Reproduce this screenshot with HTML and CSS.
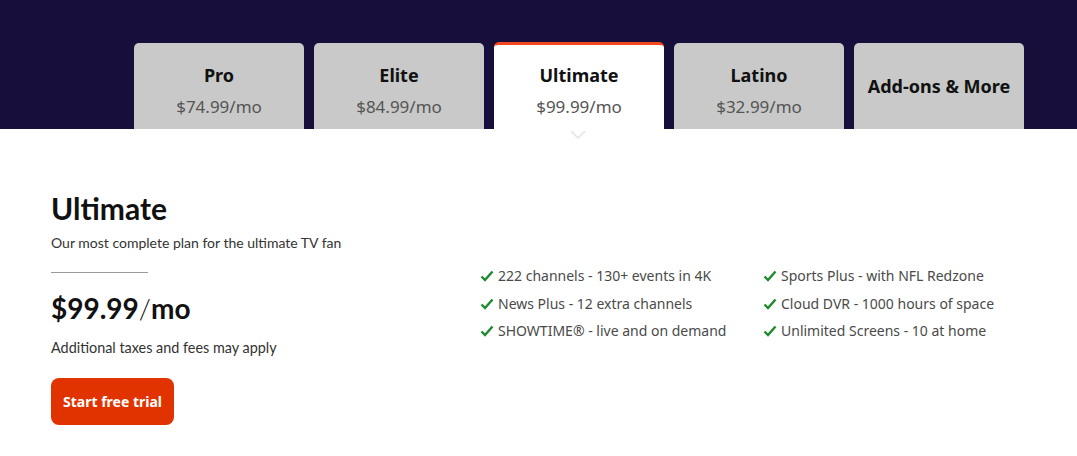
FILE: index.html
```html
<!DOCTYPE html>
<html>
<head>
<meta charset="utf-8">
<link rel="stylesheet" href="styles.css">
</head>
<body>
<header class="hero">
  <nav class="tabs">
    <div class="tab"><div class="tab-name">Pro</div><div class="tab-price">$74.99/mo</div></div>
    <div class="tab"><div class="tab-name">Elite</div><div class="tab-price">$84.99/mo</div></div>
    <div class="tab active"><div class="tab-name">Ultimate</div><div class="tab-price">$99.99/mo</div></div>
    <div class="tab"><div class="tab-name">Latino</div><div class="tab-price">$32.99/mo</div></div>
    <div class="tab single"><div class="tab-name">Add-ons &amp; More</div></div>
  </nav>
</header>
<div class="chev-row">
  <svg class="chev" width="16" height="9" viewBox="0 0 16 9"><path d="M1 1 L8 8 L15 1" fill="none" stroke="#e4e4e4" stroke-width="1.6"/></svg>
</div>
<main class="plan">
  <section class="summary">
    <h1 class="plan-title">Ultimate</h1>
    <p class="plan-sub">Our most complete plan for the ultimate TV fan</p>
    <hr class="divider">
    <div class="plan-price">$99.99<span class="slash">/</span>mo</div>
    <p class="plan-note">Additional taxes and fees may apply</p>
    <button class="cta">Start free trial</button>
  </section>
  <ul class="features">
    <li><svg class="check" viewBox="0 0 14 12"><path d="M1.5 6.5 L5 10 L12.5 1.5" fill="none" stroke="#1e8a2e" stroke-width="2.4"/></svg>222 channels - 130+ events in 4K</li>
    <li><svg class="check" viewBox="0 0 14 12"><path d="M1.5 6.5 L5 10 L12.5 1.5" fill="none" stroke="#1e8a2e" stroke-width="2.4"/></svg>Sports Plus - with NFL Redzone</li>
    <li><svg class="check" viewBox="0 0 14 12"><path d="M1.5 6.5 L5 10 L12.5 1.5" fill="none" stroke="#1e8a2e" stroke-width="2.4"/></svg>News Plus - 12 extra channels</li>
    <li><svg class="check" viewBox="0 0 14 12"><path d="M1.5 6.5 L5 10 L12.5 1.5" fill="none" stroke="#1e8a2e" stroke-width="2.4"/></svg>Cloud DVR - 1000 hours of space</li>
    <li><svg class="check" viewBox="0 0 14 12"><path d="M1.5 6.5 L5 10 L12.5 1.5" fill="none" stroke="#1e8a2e" stroke-width="2.4"/></svg>SHOWTIME® - live and on demand</li>
    <li><svg class="check" viewBox="0 0 14 12"><path d="M1.5 6.5 L5 10 L12.5 1.5" fill="none" stroke="#1e8a2e" stroke-width="2.4"/></svg>Unlimited Screens - 10 at home</li>
  </ul>
</main>
</body>
</html>
```
FILE: styles.css
```css
* { box-sizing: border-box; }
html, body { margin: 0; padding: 0; background: #fff; }
body { font-family: "Noto Sans", "Liberation Sans", sans-serif; color: #111; width: 1077px; overflow: hidden; }

.hero { background: #170e3c; height: 129px; padding-top: 43px; }
.tabs { display: flex; gap: 10px; padding-left: 134px; }
.tab {
  width: 170px; height: 86px; background: #c8c9c8; border-radius: 5px 5px 0 0;
  display: flex; flex-direction: column; align-items: center; padding-top: 20px;
}
.tab.active { background: #fff; border-top: 3px solid #f2471f; margin-top: -1px; height: 87px; padding-top: 18px; }
.tab.single { justify-content: center; padding-top: 0; }
.tab-name { font-size: 18px; font-weight: 700; color: #111; line-height: 24px; }
.tab-price { font-size: 17px; color: #555; line-height: 22px; margin-top: 9px; }

.chev-row { display: flex; padding-left: 570px; height: 10px; margin-top: 1px; }
.chev { width: 16px; height: 9px; }

.plan { display: flex; padding: 0 51px; margin-top: 50px; }
.summary { width: 430px; font-family: "Lato", "Noto Sans", sans-serif; }
.plan-title { font-size: 30px; font-weight: 700; margin: 0; line-height: 36px; }
.plan-sub { font-size: 14px; color: #333; margin: 7px 0 0; line-height: 20px; }
.divider { width: 97px; border: 0; border-top: 1px solid #9a9a9a; margin: 19px 0 0; }
.plan-price { font-size: 28px; font-weight: 700; margin-top: 18px; line-height: 34px; }
.slash { font-weight: 300; }
.plan-note { font-size: 14.4px; color: #333; margin: 13px 0 0; line-height: 20px; }
.cta {
  display: block; margin-top: 20px; width: 123px; height: 47px; border: 0; border-radius: 8px; background: #e13300;
  color: #fff; font-family: "Noto Sans", sans-serif; font-size: 14px; font-weight: 700; cursor: pointer; padding: 0;
}

.features {
  list-style: none; margin: 76px 0 0; padding: 0; display: grid; grid-template-columns: 283px 260px;
  row-gap: 7.5px; align-self: flex-start;
}
.features li { display: flex; align-items: center; font-size: 14px; color: #4a4a4a; line-height: 20px; }
.check { width: 14px; height: 12px; margin-right: 4px; margin-left: -1px; }
```
